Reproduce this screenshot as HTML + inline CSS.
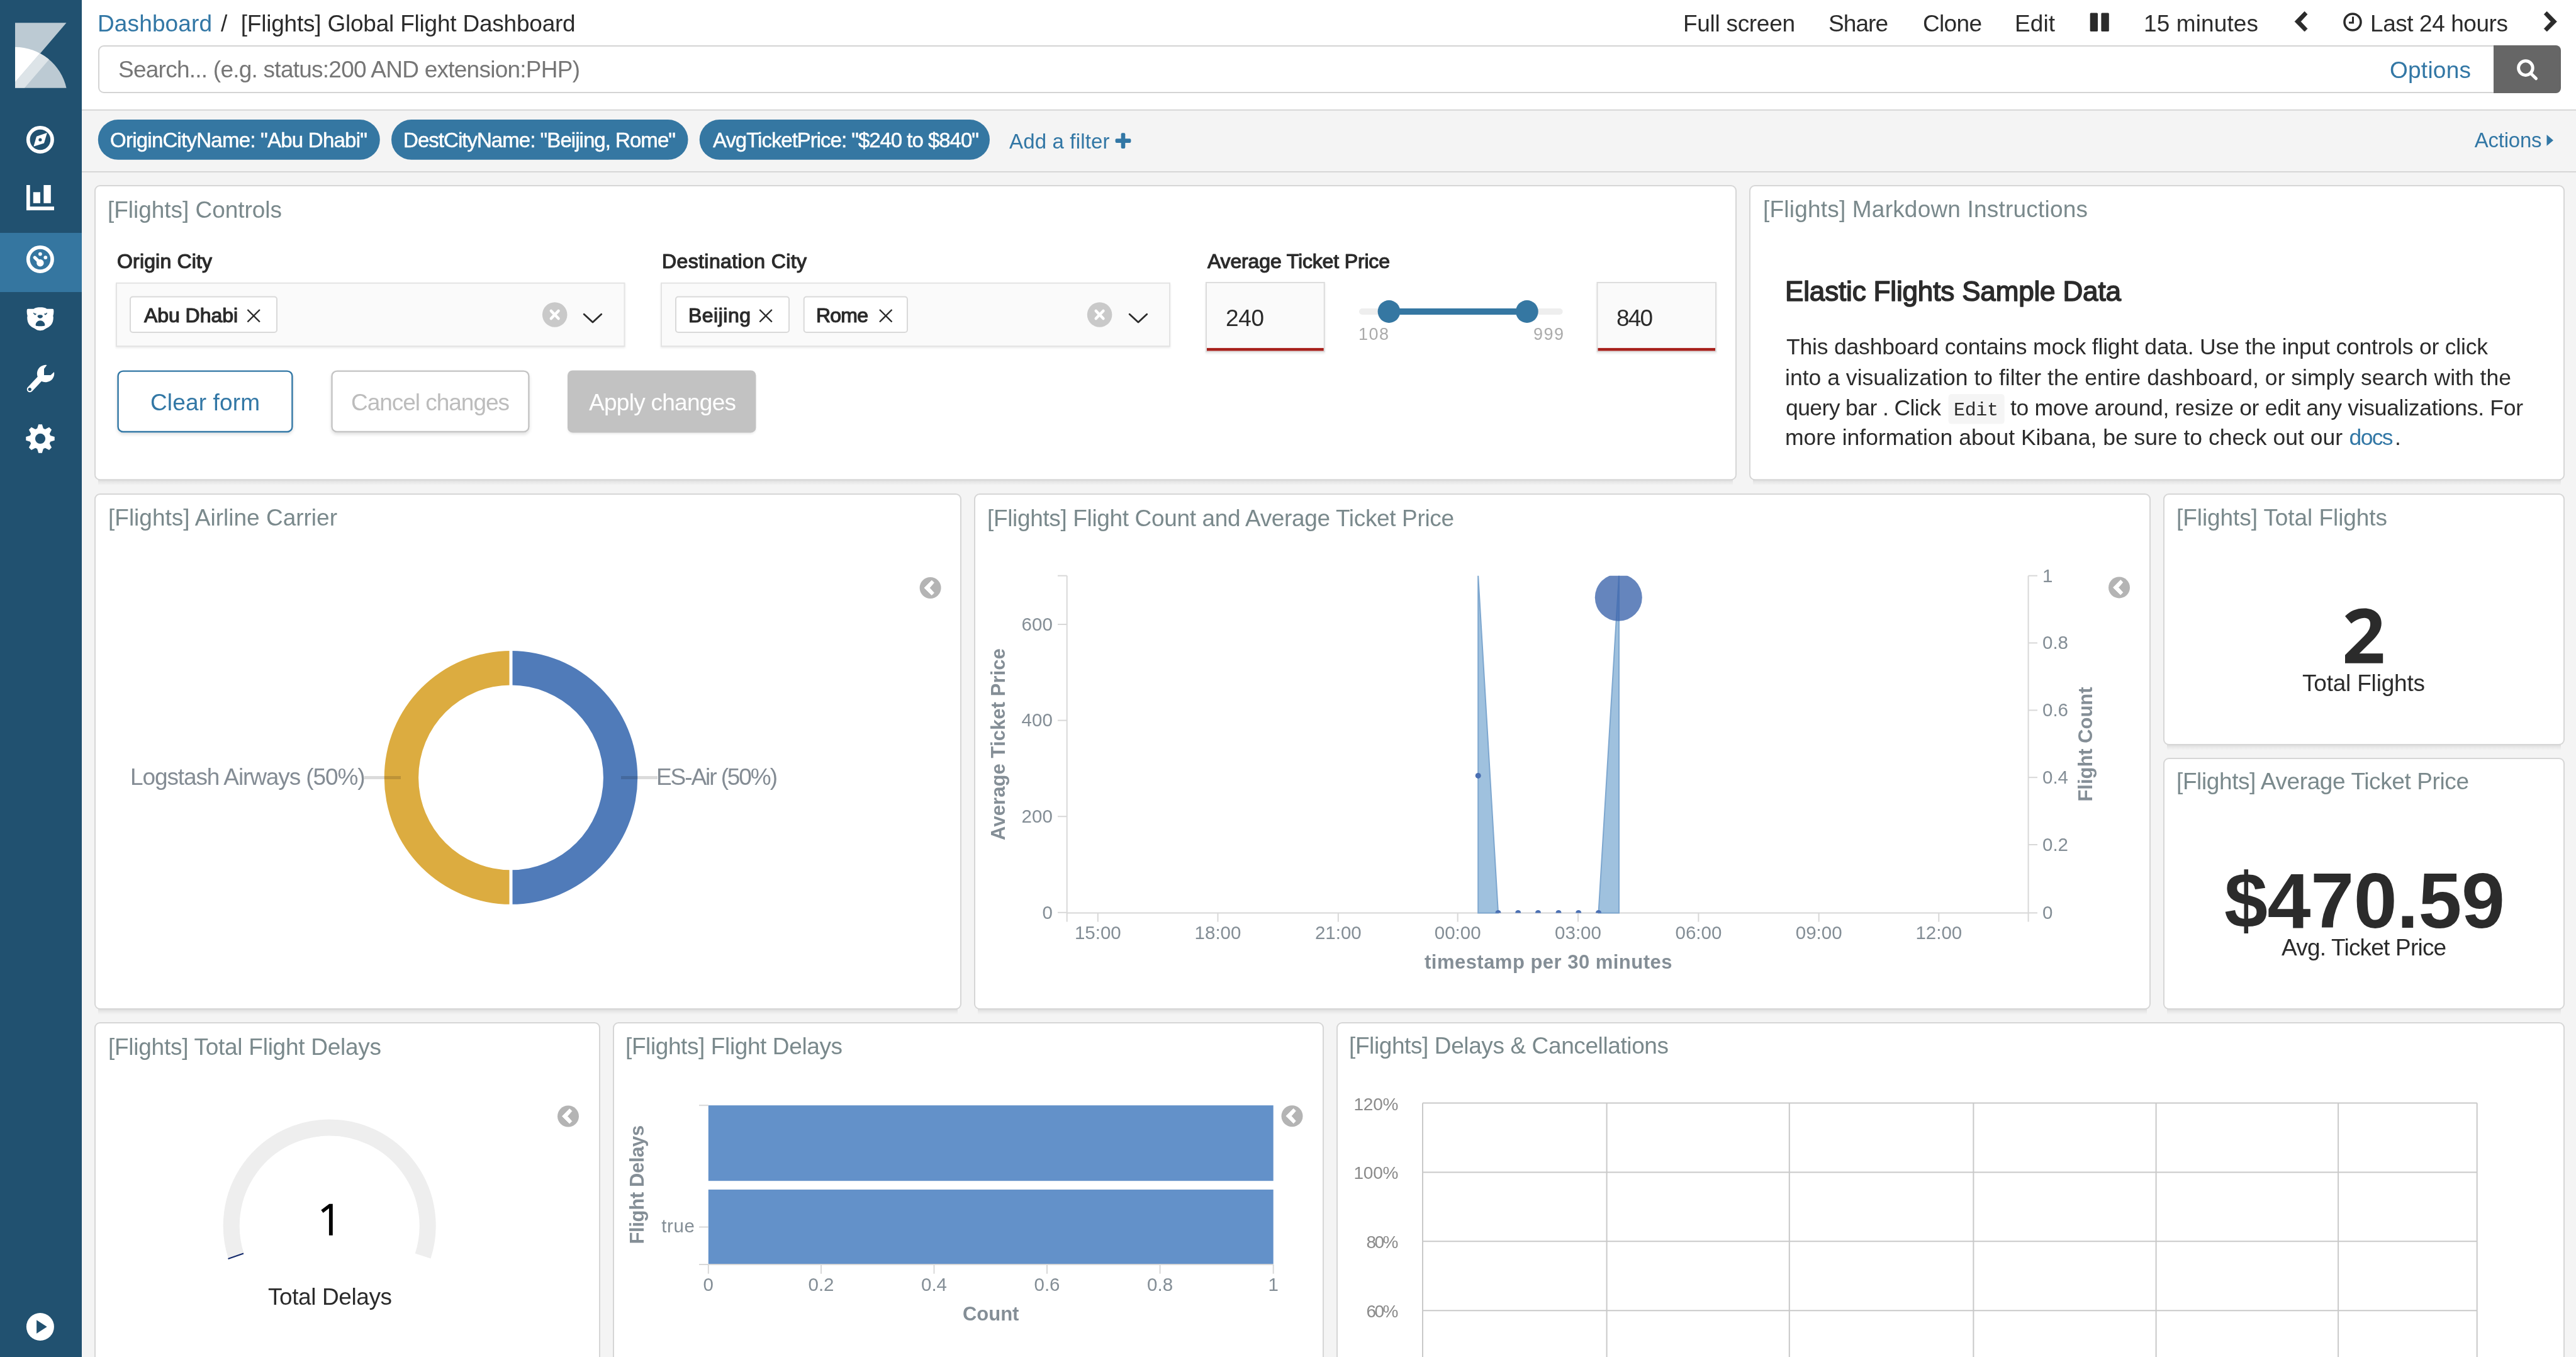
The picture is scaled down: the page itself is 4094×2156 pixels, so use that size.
<!DOCTYPE html>
<html><head><meta charset="utf-8"><title>Kibana Dashboard</title>
<style>html,body{margin:0;padding:0;width:4094px;height:2156px;overflow:hidden;background:#f4f4f4}
svg{display:block;font-family:"Liberation Sans", sans-serif;will-change:transform}</style></head>
<body><svg width="4094" height="2156" viewBox="0 0 4094 2156">
<rect x="0" y="0" width="4094" height="2156" fill="#f4f4f4"/>
<rect x="130" y="0" width="3964" height="174" fill="#ffffff"/>
<line x1="130" y1="174.8" x2="4094" y2="174.8" stroke="#d6d6d6" stroke-width="2"/>
<line x1="130" y1="273" x2="4094" y2="273" stroke="#d6d6d6" stroke-width="2"/>
<rect x="0" y="0" width="130" height="2156" fill="#215170"/>
<rect x="0" y="370" width="130" height="94" fill="#3576a0"/>
<defs><clipPath id="lgc"><path d="M24,74.7 A83.6,83.6 0 0 1 105.5,139.7 L24,139.7 Z"/></clipPath></defs>
<polygon points="24,36.2 105.5,36.2 64.2,84.5 24,84.5" fill="#bccad3"/>
<path d="M24,74.7 A83.6,83.6 0 0 1 105.5,139.7 L24,139.7 Z" fill="#bccad3"/>
<g clip-path="url(#lgc)"><polygon points="24,36 105.5,36.2 24,130.4" fill="#ffffff"/><polygon points="105.5,36.2 128.4,36.2 38.9,139.7 24,139.7 24,130.4" fill="#dde4e8"/></g>
<circle cx="63.9" cy="222" r="19.15" fill="none" stroke="#fff" stroke-width="5.7"/>
<polygon points="53.4,232.8 58,216.8 74.9,211.1 70,227.5" fill="#fff"/>
<circle cx="63.9" cy="222" r="2.6" fill="#215170"/>
<rect x="42" y="294" width="5.7" height="40.1" fill="#fff"/>
<rect x="42" y="328.2" width="44" height="5.9" fill="#fff"/>
<rect x="52.8" y="305.3" width="11.2" height="17.5" fill="#fff"/>
<rect x="69.4" y="294" width="11.4" height="28.8" fill="#fff"/>
<circle cx="63.9" cy="412" r="19.15" fill="none" stroke="#fff" stroke-width="5.7"/>
<circle cx="63.9" cy="417.7" r="5.7" fill="#fff"/>
<line x1="55.2" y1="409.2" x2="63.9" y2="417.7" stroke="#fff" stroke-width="5.2" stroke-linecap="round"/>
<circle cx="63.9" cy="403.6" r="2.9" fill="#fff"/><circle cx="72.3" cy="409.1" r="2.9" fill="#fff"/>
<path d="M42.8,492.5 C42.8,490.9 44,490.7 46,490.7 L53.5,490.7 C56,488.6 60,488.2 64,488.2 C68,488.2 72,488.6 74.5,490.7 L82,490.7 C84,490.7 85.2,490.9 85.2,492.5 C85.6,495.5 85.3,499 84.3,502 L84.8,504 C84.8,514.5 80,518.5 73.8,521.6 C71,523.2 69,525.3 64,525.3 C59,525.3 57,523.2 54.2,521.6 C48,518.5 43.2,514.5 43.2,504 L43.7,502 C42.7,499 42.4,495.5 42.8,492.5 Z" fill="#fff"/>
<path d="M59.6,502.4 C59.6,500.8 61.5,500.2 63.8,500.2 C66.1,500.2 68,500.8 68,502.4 C68,504.2 65.5,505.4 63.8,505.8 C62,505.4 59.6,504.2 59.6,502.4 Z" fill="#215170"/>
<path d="M56.6,516.8 C56.6,512.5 60,509.3 64,509.3 C68,509.3 71.4,512.5 71.4,516.8 C71.4,518 68,518.3 64,518.3 C60,518.3 56.6,518 56.6,516.8 Z" fill="#215170"/>
<path d="M53.5,497.2 C54.5,498.3 56,499 57.2,498.6 L56.8,499.8 C55.3,500.3 53.8,499.2 53.5,497.2 Z" fill="#215170" stroke="#215170" stroke-width="1"/>
<path d="M74.5,497.2 C73.5,498.3 72,499 70.8,498.6 L71.2,499.8 C72.7,500.3 74.2,499.2 74.5,497.2 Z" fill="#215170" stroke="#215170" stroke-width="1"/>
<path d="M74.5,580 A13.7,13.7 0 1 0 86,591 L80.5,596 L70,596 L70,586 Z" fill="#fff"/>
<line x1="47.5" y1="618.5" x2="64" y2="601" stroke="#fff" stroke-width="9.5" stroke-linecap="round"/>
<circle cx="47.3" cy="618.5" r="2.6" fill="#215170"/>
<polygon points="59.09,680.83 61.21,674.17 66.79,674.17 68.91,680.83 71.89,682.07 78.10,678.85 82.05,682.80 78.83,689.01 80.07,691.99 86.73,694.11 86.73,699.69 80.07,701.81 78.83,704.79 82.05,711.00 78.10,714.95 71.89,711.73 68.91,712.97 66.79,719.63 61.21,719.63 59.09,712.97 56.11,711.73 49.90,714.95 45.95,711.00 49.17,704.79 47.93,701.81 41.27,699.69 41.27,694.11 47.93,691.99 49.17,689.01 45.95,682.80 49.90,678.85 56.11,682.07" fill="#fff"/>
<circle cx="64" cy="696.9" r="8.1" fill="#215170"/>
<circle cx="63.9" cy="2108" r="22" fill="#fff"/>
<polygon points="58.1,2097.2 74.7,2108 58.1,2118.8" fill="#215170"/>
<text x="155.0" y="49.7" font-size="37" fill="#3277a5" textLength="182.0" lengthAdjust="spacing">Dashboard</text>
<text x="351.0" y="49.7" font-size="37" fill="#2b2b2b" textLength="24.0" lengthAdjust="spacing">/</text>
<text x="382.7" y="49.7" font-size="37" fill="#2b2b2b" textLength="532.0" lengthAdjust="spacing">[Flights] Global Flight Dashboard</text>
<text x="2675.0" y="50.0" font-size="37" fill="#2b2b2b" textLength="178.0" lengthAdjust="spacing">Full screen</text>
<text x="2906.0" y="50.0" font-size="37" fill="#2b2b2b" textLength="95.0" lengthAdjust="spacing">Share</text>
<text x="3056.0" y="50.0" font-size="37" fill="#2b2b2b" textLength="94.0" lengthAdjust="spacing">Clone</text>
<text x="3202.0" y="50.0" font-size="37" fill="#2b2b2b" textLength="64.0" lengthAdjust="spacing">Edit</text>
<text x="3407.0" y="50.0" font-size="37" fill="#2b2b2b" textLength="182.0" lengthAdjust="spacing">15 minutes</text>
<text x="3767.0" y="50.0" font-size="37" fill="#2b2b2b" textLength="219.0" lengthAdjust="spacing">Last 24 hours</text>
<rect x="3321.7" y="20.4" width="12.3" height="29.7" fill="#2b2b2b" rx="1.5"/>
<rect x="3339.4" y="20.4" width="12.4" height="29.7" fill="#2b2b2b" rx="1.5"/>
<polygon points="3647.1,34.3 3662.6,18.3 3667,22.7 3656.4,34.3 3667,45.6 3662.6,50" fill="#2b2b2b" stroke="#2b2b2b" stroke-width="0.8" stroke-linejoin="round"/>
<polygon points="4063.4,34.3 4047.7,18.3 4043.3,22.7 4054.1,34.3 4043.3,45.6 4047.7,50" fill="#2b2b2b" stroke="#2b2b2b" stroke-width="0.8" stroke-linejoin="round"/>
<circle cx="3739" cy="35" r="13" fill="none" stroke="#2b2b2b" stroke-width="3.6"/>
<polyline points="3739.5,26.5 3739.5,36 3733,36" fill="none" stroke="#2b2b2b" stroke-width="3"/>
<path d="M3964,73 L165,73 A8,8 0 0 0 157,81 L157,139 A8,8 0 0 0 165,147 L3964,147" fill="#fff" stroke="#d4d4d4" stroke-width="2"/>
<path d="M3963,72 L4062,72 A8,8 0 0 1 4070,80 L4070,140 A8,8 0 0 1 4062,148 L3963,148 Z" fill="#666666"/>
<circle cx="4013.9" cy="108.1" r="11.3" fill="none" stroke="#fff" stroke-width="5"/>
<line x1="4022" y1="116.5" x2="4030.5" y2="124.8" stroke="#fff" stroke-width="5" stroke-linecap="round"/>
<text x="188.0" y="122.7" font-size="37" fill="#767676" textLength="734.0" lengthAdjust="spacing">Search... (e.g. status:200 AND extension:PHP)</text>
<text x="3798.0" y="124.0" font-size="37" fill="#3277a5" textLength="129.0" lengthAdjust="spacing">Options</text>
<rect x="155.8" y="190.1" width="447.99999999999994" height="63.7" fill="#3577a2" rx="31.85"/>
<text x="175.0" y="234.0" font-size="33" fill="#ffffff" stroke="#ffffff" stroke-width="0.5" stroke-linejoin="round" textLength="409.0" lengthAdjust="spacing">OriginCityName: "Abu Dhabi"</text>
<rect x="622" y="190.1" width="471.5" height="63.7" fill="#3577a2" rx="31.85"/>
<text x="641.0" y="234.0" font-size="33" fill="#ffffff" stroke="#ffffff" stroke-width="0.5" stroke-linejoin="round" textLength="433.0" lengthAdjust="spacing">DestCityName: "Beijing, Rome"</text>
<rect x="1111.7" y="190.1" width="461.29999999999995" height="63.7" fill="#3577a2" rx="31.85"/>
<text x="1133.0" y="234.0" font-size="33" fill="#ffffff" stroke="#ffffff" stroke-width="0.5" stroke-linejoin="round" textLength="423.0" lengthAdjust="spacing">AvgTicketPrice: "$240 to $840"</text>
<text x="1604.0" y="236.0" font-size="33" fill="#3277a5" textLength="159.5" lengthAdjust="spacing">Add a filter</text>
<rect x="1772.6" y="220.3" width="24.8" height="6.6" fill="#3277a5" rx="2"/>
<rect x="1781.7" y="211.2" width="6.6" height="24.8" fill="#3277a5" rx="2"/>
<text x="3932.8" y="234.3" font-size="33" fill="#3277a5" textLength="106.7" lengthAdjust="spacing">Actions</text>
<polygon points="4047.5,214 4058,223 4047.5,231.8" fill="#3277a5"/>
<defs><linearGradient id="pgr" x1="0" y1="0" x2="0" y2="1"><stop offset="0" stop-color="#000" stop-opacity="0.13"/><stop offset="0.4" stop-color="#000" stop-opacity="0.06"/><stop offset="1" stop-color="#000" stop-opacity="0"/></linearGradient></defs>
<defs><filter id="psh" x="-5%" y="-5%" width="110%" height="115%"><feDropShadow dx="0" dy="3" stdDeviation="3" flood-color="#000" flood-opacity="0.10"/></filter></defs>
<rect x="156" y="761.2" width="2598" height="10" fill="url(#pgr)"/>
<rect x="151" y="295" width="2608" height="467.20000000000005" rx="8" fill="#fff" stroke="#d6d6d6" stroke-width="2"/>
<rect x="2786" y="761.2" width="1284" height="10" fill="url(#pgr)"/>
<rect x="2781" y="295" width="1294" height="467.20000000000005" rx="8" fill="#fff" stroke="#d6d6d6" stroke-width="2"/>
<rect x="156" y="1602" width="1366" height="10" fill="url(#pgr)"/>
<rect x="151" y="785" width="1376" height="818" rx="8" fill="#fff" stroke="#d6d6d6" stroke-width="2"/>
<rect x="1554" y="1602" width="1858" height="10" fill="url(#pgr)"/>
<rect x="1549" y="785" width="1868" height="818" rx="8" fill="#fff" stroke="#d6d6d6" stroke-width="2"/>
<rect x="3444" y="1182" width="626" height="10" fill="url(#pgr)"/>
<rect x="3439" y="785" width="636" height="398" rx="8" fill="#fff" stroke="#d6d6d6" stroke-width="2"/>
<rect x="3444" y="1602" width="626" height="10" fill="url(#pgr)"/>
<rect x="3439" y="1205" width="636" height="398" rx="8" fill="#fff" stroke="#d6d6d6" stroke-width="2"/>
<rect x="156" y="2398" width="792" height="10" fill="url(#pgr)"/>
<rect x="151" y="1625" width="802" height="774" rx="8" fill="#fff" stroke="#d6d6d6" stroke-width="2"/>
<rect x="980" y="2398" width="1118" height="10" fill="url(#pgr)"/>
<rect x="975" y="1625" width="1128" height="774" rx="8" fill="#fff" stroke="#d6d6d6" stroke-width="2"/>
<rect x="2130" y="2398" width="1940" height="10" fill="url(#pgr)"/>
<rect x="2125" y="1625" width="1950" height="774" rx="8" fill="#fff" stroke="#d6d6d6" stroke-width="2"/>
<text x="171.0" y="345.9" font-size="37" fill="#7a898c" textLength="277.0" lengthAdjust="spacing">[Flights] Controls</text>
<text x="186.0" y="426.0" font-size="32" fill="#2b2b2b" stroke="#2b2b2b" stroke-width="1.2" stroke-linejoin="round" textLength="151.0" lengthAdjust="spacing">Origin City</text>
<text x="1052.0" y="426.0" font-size="32" fill="#2b2b2b" stroke="#2b2b2b" stroke-width="1.2" stroke-linejoin="round" textLength="230.0" lengthAdjust="spacing">Destination City</text>
<text x="1919.0" y="426.0" font-size="32" fill="#2b2b2b" stroke="#2b2b2b" stroke-width="1.2" stroke-linejoin="round" textLength="290.0" lengthAdjust="spacing">Average Ticket Price</text>
<defs><filter id="csh" x="-5%" y="-10%" width="110%" height="130%"><feDropShadow dx="0" dy="2" stdDeviation="1.5" flood-color="#000" flood-opacity="0.08"/></filter></defs>
<rect x="185" y="449.8" width="807.5" height="100.2" fill="#fafafa" stroke="#e4e4e4" stroke-width="2" filter="url(#csh)"/>
<rect x="1051" y="449.8" width="808" height="100.2" fill="#fafafa" stroke="#e4e4e4" stroke-width="2" filter="url(#csh)"/>
<rect x="207" y="471.5" width="233" height="56.5" rx="4" fill="#fff" stroke="#d9d9d9" stroke-width="2"/>
<text x="229.0" y="512.0" font-size="32" fill="#2b2b2b" stroke="#2b2b2b" stroke-width="1.2" stroke-linejoin="round" textLength="149.0" lengthAdjust="spacing">Abu Dhabi</text>
<line x1="393.4" y1="492" x2="412.9" y2="511.5" stroke="#2b2b2b" stroke-width="2.4"/>
<line x1="412.9" y1="492" x2="393.4" y2="511.5" stroke="#2b2b2b" stroke-width="2.4"/>
<rect x="1074" y="471.5" width="180" height="56.5" rx="4" fill="#fff" stroke="#d9d9d9" stroke-width="2"/>
<text x="1094.0" y="512.0" font-size="32" fill="#2b2b2b" stroke="#2b2b2b" stroke-width="1.2" stroke-linejoin="round" textLength="99.0" lengthAdjust="spacing">Beijing</text>
<line x1="1207.3" y1="492" x2="1226.8" y2="511.5" stroke="#2b2b2b" stroke-width="2.4"/>
<line x1="1226.8" y1="492" x2="1207.3" y2="511.5" stroke="#2b2b2b" stroke-width="2.4"/>
<rect x="1277.7" y="471.5" width="164.29999999999995" height="56.5" rx="4" fill="#fff" stroke="#d9d9d9" stroke-width="2"/>
<text x="1297.0" y="512.0" font-size="32" fill="#2b2b2b" stroke="#2b2b2b" stroke-width="1.2" stroke-linejoin="round" textLength="83.0" lengthAdjust="spacing">Rome</text>
<line x1="1398" y1="492" x2="1417.5" y2="511.5" stroke="#2b2b2b" stroke-width="2.4"/>
<line x1="1417.5" y1="492" x2="1398" y2="511.5" stroke="#2b2b2b" stroke-width="2.4"/>
<circle cx="881.7" cy="500" r="19.8" fill="#c9c9c9"/>
<line x1="875.9000000000001" y1="494" x2="887.5" y2="506" stroke="#fff" stroke-width="4.6" stroke-linecap="round"/>
<line x1="887.5" y1="494" x2="875.9000000000001" y2="506" stroke="#fff" stroke-width="4.6" stroke-linecap="round"/>
<polyline points="928.2,499.3 942,512 955.7,499.3" fill="none" stroke="#2b2b2b" stroke-width="2.8" stroke-linecap="round" stroke-linejoin="round"/>
<circle cx="1747.6" cy="500" r="19.8" fill="#c9c9c9"/>
<line x1="1741.8" y1="494" x2="1753.3999999999999" y2="506" stroke="#fff" stroke-width="4.6" stroke-linecap="round"/>
<line x1="1753.3999999999999" y1="494" x2="1741.8" y2="506" stroke="#fff" stroke-width="4.6" stroke-linecap="round"/>
<polyline points="1795.2,499.3 1809,512 1822.7,499.3" fill="none" stroke="#2b2b2b" stroke-width="2.8" stroke-linecap="round" stroke-linejoin="round"/>
<rect x="187.6" y="589.6" width="276.8" height="96.4" rx="8" fill="#fff" stroke="#3277a5" stroke-width="2.4" filter="url(#bsh)"/>
<text x="239.0" y="652.0" font-size="37" fill="#3277a5" textLength="174.0" lengthAdjust="spacing">Clear form</text>
<rect x="527.5" y="589.6" width="312.9" height="96.4" rx="8" fill="#fff" stroke="#c4c4c4" stroke-width="2.4" filter="url(#bsh)"/>
<defs><filter id="bsh" x="-5%" y="-10%" width="110%" height="130%"><feDropShadow dx="0" dy="3" stdDeviation="2.5" flood-color="#000" flood-opacity="0.12"/></filter></defs>
<text x="558.0" y="652.0" font-size="37" fill="#bcbcbc" textLength="252.0" lengthAdjust="spacing">Cancel changes</text>
<rect x="902" y="588.5" width="299.4" height="98.9" rx="8" fill="#c2c2c2" filter="url(#csh)"/>
<text x="936.0" y="652.0" font-size="37" fill="#ffffff" textLength="234.0" lengthAdjust="spacing">Apply changes</text>
<rect x="1917" y="448.9" width="187.69999999999982" height="109.7" fill="#fafafa" stroke="#dcdcdc" stroke-width="2" filter="url(#csh)"/>
<rect x="1918" y="552.9" width="185.69999999999982" height="4.6" fill="#a7201b"/>
<text x="1948.0" y="517.5" font-size="37" fill="#2b2b2b" textLength="61.0" lengthAdjust="spacing">240</text>
<rect x="2538.5" y="448.9" width="188.5" height="109.7" fill="#fafafa" stroke="#dcdcdc" stroke-width="2" filter="url(#csh)"/>
<rect x="2539.5" y="552.9" width="186.5" height="4.6" fill="#a7201b"/>
<text x="2569.0" y="517.5" font-size="37" fill="#2b2b2b" textLength="58.0" lengthAdjust="spacing">840</text>
<line x1="2165" y1="495" x2="2478.6" y2="495" stroke="#eeeeee" stroke-width="10" stroke-linecap="round"/>
<line x1="2207.5" y1="495" x2="2426.8" y2="495" stroke="#3577a2" stroke-width="10"/>
<circle cx="2207.5" cy="495" r="17.9" fill="#3577a2"/><circle cx="2426.8" cy="495" r="17.9" fill="#3577a2"/>
<text x="2159.0" y="539.6" font-size="27" fill="#aaaaaa" textLength="48.0" lengthAdjust="spacing">108</text>
<text x="2437.0" y="539.6" font-size="27" fill="#aaaaaa" textLength="48.0" lengthAdjust="spacing">999</text>
<text x="2802.0" y="345.2" font-size="37" fill="#7a898c" textLength="516.0" lengthAdjust="spacing">[Flights] Markdown Instructions</text>
<text x="2837.0" y="477.7" font-size="44" fill="#2b2b2b" stroke="#2b2b2b" stroke-width="1.6" stroke-linejoin="round" textLength="534.0" lengthAdjust="spacing">Elastic Flights Sample Data</text>
<text x="2839.0" y="563.4" font-size="35.5" fill="#2b2b2b" textLength="1115.0" lengthAdjust="spacing">This dashboard contains mock flight data. Use the input controls or click</text>
<text x="2837.0" y="611.5" font-size="35.5" fill="#2b2b2b" textLength="1154.0" lengthAdjust="spacing">into a visualization to filter the entire dashboard, or simply search with the</text>
<text x="2838.0" y="659.7" font-size="35.5" fill="#2b2b2b" textLength="247.0" lengthAdjust="spacing">query bar . Click</text>
<rect x="3096.6" y="626" width="89.1" height="47.6" fill="#f5f5f5" rx="5"/>
<text x="3105.0" y="659.7" font-size="30" fill="#2b2b2b" font-family='"Liberation Mono", monospace' textLength="71.0" lengthAdjust="spacing">Edit</text>
<text x="3195.0" y="659.7" font-size="35.5" fill="#2b2b2b" textLength="815.0" lengthAdjust="spacing">to move around, resize or edit any visualizations. For</text>
<text x="2837.0" y="707.2" font-size="35.5" fill="#2b2b2b" textLength="886.0" lengthAdjust="spacing">more information about Kibana, be sure to check out our</text>
<text x="3733.6" y="707.2" font-size="35.5" fill="#3277a5" textLength="69.9" lengthAdjust="spacing">docs</text>
<text x="3806.0" y="707.2" font-size="35.5" fill="#2b2b2b">.</text>
<text x="172.0" y="834.7" font-size="37" fill="#7a898c" textLength="364.0" lengthAdjust="spacing">[Flights] Airline Carrier</text>
<path d="M812,1034.0 A201.4,201.4 0 0 1 812,1436.8000000000002 L812,1382.3000000000002 A146.9,146.9 0 0 0 812,1088.5 Z" fill="#507bb9"/>
<path d="M812,1034.0 A201.4,201.4 0 0 0 812,1436.8000000000002 L812,1382.3000000000002 A146.9,146.9 0 0 1 812,1088.5 Z" fill="#dcac40"/>
<line x1="812" y1="1032.0" x2="812" y2="1090.5" stroke="#fff" stroke-width="5"/>
<line x1="812" y1="1380.3000000000002" x2="812" y2="1438.8000000000002" stroke="#fff" stroke-width="5"/>
<line x1="578.5" y1="1235.5" x2="637" y2="1235.5" stroke="#000" stroke-width="5" stroke-opacity="0.14"/>
<line x1="987" y1="1235.5" x2="1045" y2="1235.5" stroke="#000" stroke-width="5" stroke-opacity="0.14"/>
<text x="207.0" y="1247.0" font-size="37" fill="#848c94" textLength="373.5" lengthAdjust="spacing">Logstash Airways (50%)</text>
<text x="1043.0" y="1247.0" font-size="37" fill="#848c94" textLength="193.0" lengthAdjust="spacing">ES-Air (50%)</text>
<circle cx="1478.6" cy="934" r="17" fill="#b4b4b4"/>
<polygon points="1469.1,934.0 1480.8,922.2 1484.4,925.8 1477.3,934.0 1484.4,941.9 1480.8,945.5" fill="#fff" stroke="#fff" stroke-width="1" stroke-linejoin="round"/>
<text x="1569.0" y="835.7" font-size="37" fill="#7a898c" textLength="742.0" lengthAdjust="spacing">[Flights] Flight Count and Average Ticket Price</text>
<line x1="1695.7" y1="914.7" x2="1695.7" y2="1464.6" stroke="#d8d8d8" stroke-width="2"/>
<line x1="1681" y1="914.7" x2="1695.7" y2="914.7" stroke="#d8d8d8" stroke-width="2"/>
<line x1="1695.7" y1="1450.4" x2="3223.6" y2="1450.4" stroke="#d8d8d8" stroke-width="2"/>
<line x1="3223.6" y1="914.7" x2="3223.6" y2="1464.6" stroke="#d8d8d8" stroke-width="2"/>
<line x1="1681" y1="992" x2="1695.7" y2="992" stroke="#d8d8d8" stroke-width="2"/>
<text x="1672.8" y="1001.7" font-size="29.5" fill="#848e96" text-anchor="end">600</text>
<line x1="1681" y1="1144.6" x2="1695.7" y2="1144.6" stroke="#d8d8d8" stroke-width="2"/>
<text x="1672.8" y="1154.3" font-size="29.5" fill="#848e96" text-anchor="end">400</text>
<line x1="1681" y1="1297.2" x2="1695.7" y2="1297.2" stroke="#d8d8d8" stroke-width="2"/>
<text x="1672.8" y="1306.9" font-size="29.5" fill="#848e96" text-anchor="end">200</text>
<line x1="1681" y1="1449.8" x2="1695.7" y2="1449.8" stroke="#d8d8d8" stroke-width="2"/>
<text x="1672.8" y="1459.5" font-size="29.5" fill="#848e96" text-anchor="end">0</text>
<line x1="3223.6" y1="914.7" x2="3238" y2="914.7" stroke="#d8d8d8" stroke-width="2"/>
<text x="3246.0" y="924.5" font-size="29.5" fill="#848e96">1</text>
<line x1="3223.6" y1="1021.5" x2="3238" y2="1021.5" stroke="#d8d8d8" stroke-width="2"/>
<text x="3246.0" y="1031.3" font-size="29.5" fill="#848e96">0.8</text>
<line x1="3223.6" y1="1128.4" x2="3238" y2="1128.4" stroke="#d8d8d8" stroke-width="2"/>
<text x="3246.0" y="1138.2" font-size="29.5" fill="#848e96">0.6</text>
<line x1="3223.6" y1="1235.2" x2="3238" y2="1235.2" stroke="#d8d8d8" stroke-width="2"/>
<text x="3246.0" y="1245.0" font-size="29.5" fill="#848e96">0.4</text>
<line x1="3223.6" y1="1342" x2="3238" y2="1342" stroke="#d8d8d8" stroke-width="2"/>
<text x="3246.0" y="1351.8" font-size="29.5" fill="#848e96">0.2</text>
<line x1="3223.6" y1="1450.4" x2="3238" y2="1450.4" stroke="#d8d8d8" stroke-width="2"/>
<text x="3246.0" y="1460.2" font-size="29.5" fill="#848e96">0</text>
<line x1="1744.8" y1="1450.4" x2="1744.8" y2="1464.6" stroke="#d8d8d8" stroke-width="2"/>
<text x="1744.8" y="1492.0" font-size="29.5" fill="#848e96" text-anchor="middle">15:00</text>
<line x1="1935.5" y1="1450.4" x2="1935.5" y2="1464.6" stroke="#d8d8d8" stroke-width="2"/>
<text x="1935.5" y="1492.0" font-size="29.5" fill="#848e96" text-anchor="middle">18:00</text>
<line x1="2126.8" y1="1450.4" x2="2126.8" y2="1464.6" stroke="#d8d8d8" stroke-width="2"/>
<text x="2126.8" y="1492.0" font-size="29.5" fill="#848e96" text-anchor="middle">21:00</text>
<line x1="2316.7" y1="1450.4" x2="2316.7" y2="1464.6" stroke="#d8d8d8" stroke-width="2"/>
<text x="2316.7" y="1492.0" font-size="29.5" fill="#848e96" text-anchor="middle">00:00</text>
<line x1="2508" y1="1450.4" x2="2508" y2="1464.6" stroke="#d8d8d8" stroke-width="2"/>
<text x="2508.0" y="1492.0" font-size="29.5" fill="#848e96" text-anchor="middle">03:00</text>
<line x1="2699.4" y1="1450.4" x2="2699.4" y2="1464.6" stroke="#d8d8d8" stroke-width="2"/>
<text x="2699.4" y="1492.0" font-size="29.5" fill="#848e96" text-anchor="middle">06:00</text>
<line x1="2890.7" y1="1450.4" x2="2890.7" y2="1464.6" stroke="#d8d8d8" stroke-width="2"/>
<text x="2890.7" y="1492.0" font-size="29.5" fill="#848e96" text-anchor="middle">09:00</text>
<line x1="3081.3" y1="1450.4" x2="3081.3" y2="1464.6" stroke="#d8d8d8" stroke-width="2"/>
<text x="3081.3" y="1492.0" font-size="29.5" fill="#848e96" text-anchor="middle">12:00</text>
<text x="2264.0" y="1539.2" font-size="31" fill="#848e96" font-weight="700" textLength="393.4" lengthAdjust="spacing">timestamp per 30 minutes</text>
<text x="0.0" y="0.0" font-size="31" fill="#848e96" font-weight="700" textLength="304.7" lengthAdjust="spacing" transform="translate(1597,1334.9) rotate(-90)">Average Ticket Price</text>
<text x="0.0" y="0.0" font-size="31" fill="#848e96" font-weight="700" textLength="182.0" lengthAdjust="spacing" transform="translate(3325,1273.5) rotate(-90)">Flight Count</text>
<polygon points="2349.2,914.7 2381,1450.4 2349.2,1450.4" fill="#9fc1de" stroke="#7ea7cf" stroke-width="2"/>
<polygon points="2540.5,1450.4 2573,914.7 2573,1450.4" fill="#9fc1de" stroke="#7ea7cf" stroke-width="2"/>
<defs><clipPath id="chc"><rect x="1695.7" y="914.7" width="1527.9" height="535.7"/></clipPath></defs>
<g clip-path="url(#chc)">
<circle cx="2572.3" cy="949.3" r="37.5" fill="#3e66ad" fill-opacity="0.8"/>
<circle cx="2349.2" cy="1232.4" r="4.5" fill="#4a6fb2"/>
<circle cx="2381" cy="1450.4" r="4.5" fill="#4a6fb2"/>
<circle cx="2412.7" cy="1450.4" r="4.5" fill="#4a6fb2"/>
<circle cx="2444.5" cy="1450.4" r="4.5" fill="#4a6fb2"/>
<circle cx="2477" cy="1450.4" r="4.5" fill="#4a6fb2"/>
<circle cx="2508.7" cy="1450.4" r="4.5" fill="#4a6fb2"/>
<circle cx="2540.5" cy="1450.4" r="4.5" fill="#4a6fb2"/>
</g>
<circle cx="3368" cy="933.4" r="17" fill="#b4b4b4"/>
<polygon points="3358.5,933.4 3370.2,921.6 3373.8,925.2 3366.7,933.4 3373.8,941.3 3370.2,944.9" fill="#fff" stroke="#fff" stroke-width="1" stroke-linejoin="round"/>
<text x="3459.0" y="834.7" font-size="37" fill="#7a898c" textLength="335.0" lengthAdjust="spacing">[Flights] Total Flights</text>
<path d="M3727,1053.8 L3787.2,1053.8 L3787.2,1038.2 L3749.7,1038.2 L3772.1,1016 C3780,1008 3784.8,1000 3784.8,990.1 C3784.8,975 3772.1,966.5 3757.9,966.5 C3743.8,966.5 3735,971.2 3727,978.9 L3736.9,990.7 C3743.8,985.4 3750.8,981.7 3757.9,981.7 C3763.8,981.7 3767.1,985.4 3767.1,991.3 C3767.1,999.5 3762.6,1005.4 3756.7,1011.3 L3727,1040.8 Z" fill="#2b2b2b"/>
<text x="3659.0" y="1097.6" font-size="37" fill="#2b2b2b" textLength="195.0" lengthAdjust="spacing">Total Flights</text>
<text x="3459.0" y="1254.3" font-size="37" fill="#7a898c" textLength="465.0" lengthAdjust="spacing">[Flights] Average Ticket Price</text>
<text x="3535.0" y="1474.0" font-size="124" fill="#2b2b2b" font-weight="700" textLength="446.0" lengthAdjust="spacing">$470.59</text>
<text x="3626.0" y="1517.8" font-size="37" fill="#2b2b2b" textLength="262.2" lengthAdjust="spacing">Avg. Ticket Price</text>
<text x="172.0" y="1675.6" font-size="37" fill="#7a898c" textLength="434.0" lengthAdjust="spacing">[Flights] Total Flight Delays</text>
<path d="M375.3,1995.6 A156,156 0 1 1 672.1,1995.6" fill="none" stroke="#eeeeee" stroke-width="26"/>
<line x1="362.5" y1="2000" x2="387" y2="1991.5" stroke="#13296b" stroke-width="2"/>
<polygon points="523.3,1912.7 528.8,1912.7 528.8,1962.8 522.9,1962.8 522.9,1919.8 513.6,1927.1 510.3,1922.5" fill="#000"/>
<text x="426.0" y="2072.5" font-size="37" fill="#2b2b2b" textLength="197.0" lengthAdjust="spacing">Total Delays</text>
<circle cx="903" cy="1773.5" r="17" fill="#b4b4b4"/>
<polygon points="893.5,1773.5 905.2,1761.7 908.8,1765.3 901.7,1773.5 908.8,1781.4 905.2,1785.0" fill="#fff" stroke="#fff" stroke-width="1" stroke-linejoin="round"/>
<text x="994.0" y="1674.5" font-size="37" fill="#7a898c" textLength="345.0" lengthAdjust="spacing">[Flights] Flight Delays</text>
<rect x="1125.8" y="1756.2" width="897.9" height="120" fill="#6391c9"/>
<rect x="1125.8" y="1890" width="897.9" height="118.6" fill="#6391c9"/>
<line x1="1111" y1="1756.2" x2="1125.8" y2="1756.2" stroke="#d8d8d8" stroke-width="2"/>
<line x1="1111" y1="1949.5" x2="1125.8" y2="1949.5" stroke="#d8d8d8" stroke-width="2"/>
<line x1="1111" y1="2009" x2="2023.7" y2="2009" stroke="#d8d8d8" stroke-width="2"/>
<line x1="1125.8" y1="2009" x2="1125.8" y2="2023.7" stroke="#d8d8d8" stroke-width="2"/>
<text x="1125.8" y="2051.2" font-size="29.5" fill="#848e96" text-anchor="middle">0</text>
<line x1="1305" y1="2009" x2="1305" y2="2023.7" stroke="#d8d8d8" stroke-width="2"/>
<text x="1305.0" y="2051.2" font-size="29.5" fill="#848e96" text-anchor="middle">0.2</text>
<line x1="1484.5" y1="2009" x2="1484.5" y2="2023.7" stroke="#d8d8d8" stroke-width="2"/>
<text x="1484.5" y="2051.2" font-size="29.5" fill="#848e96" text-anchor="middle">0.4</text>
<line x1="1664" y1="2009" x2="1664" y2="2023.7" stroke="#d8d8d8" stroke-width="2"/>
<text x="1664.0" y="2051.2" font-size="29.5" fill="#848e96" text-anchor="middle">0.6</text>
<line x1="1843.6" y1="2009" x2="1843.6" y2="2023.7" stroke="#d8d8d8" stroke-width="2"/>
<text x="1843.6" y="2051.2" font-size="29.5" fill="#848e96" text-anchor="middle">0.8</text>
<line x1="2023.7" y1="2009" x2="2023.7" y2="2023.7" stroke="#d8d8d8" stroke-width="2"/>
<text x="2023.7" y="2051.2" font-size="29.5" fill="#848e96" text-anchor="middle">1</text>
<text x="1051.2" y="1958.0" font-size="29.5" fill="#848e96" textLength="52.8" lengthAdjust="spacing">true</text>
<text x="1574.7" y="2098.4" font-size="31" fill="#848e96" font-weight="700" text-anchor="middle">Count</text>
<text x="0.0" y="0.0" font-size="31" fill="#848e96" font-weight="700" textLength="188.7" lengthAdjust="spacing" transform="translate(1023,1976.5) rotate(-90)">Flight Delays</text>
<circle cx="2053.5" cy="1773.2" r="17" fill="#b4b4b4"/>
<polygon points="2044.0,1773.2 2055.7,1761.4 2059.3,1765.0 2052.2,1773.2 2059.3,1781.1 2055.7,1784.7" fill="#fff" stroke="#fff" stroke-width="1" stroke-linejoin="round"/>
<text x="2144.0" y="1673.9" font-size="37" fill="#7a898c" textLength="508.0" lengthAdjust="spacing">[Flights] Delays &amp; Cancellations</text>
<line x1="2261" y1="1752.5" x2="3936.7" y2="1752.5" stroke="#c9c9c9" stroke-width="2"/>
<line x1="2261" y1="1862.4" x2="3936.7" y2="1862.4" stroke="#c9c9c9" stroke-width="2"/>
<line x1="2261" y1="1972.3" x2="3936.7" y2="1972.3" stroke="#c9c9c9" stroke-width="2"/>
<line x1="2261" y1="2082.2" x2="3936.7" y2="2082.2" stroke="#c9c9c9" stroke-width="2"/>
<line x1="2261" y1="1752.5" x2="2261" y2="2156" stroke="#c9c9c9" stroke-width="2"/>
<line x1="2553.6" y1="1752.5" x2="2553.6" y2="2156" stroke="#c9c9c9" stroke-width="2"/>
<line x1="2843.8" y1="1752.5" x2="2843.8" y2="2156" stroke="#c9c9c9" stroke-width="2"/>
<line x1="3136.4" y1="1752.5" x2="3136.4" y2="2156" stroke="#c9c9c9" stroke-width="2"/>
<line x1="3426.6" y1="1752.5" x2="3426.6" y2="2156" stroke="#c9c9c9" stroke-width="2"/>
<line x1="3716.1" y1="1752.5" x2="3716.1" y2="2156" stroke="#c9c9c9" stroke-width="2"/>
<line x1="3936.7" y1="1752.5" x2="3936.7" y2="2156" stroke="#c9c9c9" stroke-width="2"/>
<text x="2151.5" y="1763.5" font-size="28" fill="#8a8a8a" textLength="71.0" lengthAdjust="spacing">120%</text>
<text x="2151.5" y="1873.4" font-size="28" fill="#8a8a8a" textLength="71.0" lengthAdjust="spacing">100%</text>
<text x="2171.5" y="1983.3" font-size="28" fill="#8a8a8a" textLength="51.0" lengthAdjust="spacing">80%</text>
<text x="2171.5" y="2093.2" font-size="28" fill="#8a8a8a" textLength="51.0" lengthAdjust="spacing">60%</text>
</svg></body></html>
